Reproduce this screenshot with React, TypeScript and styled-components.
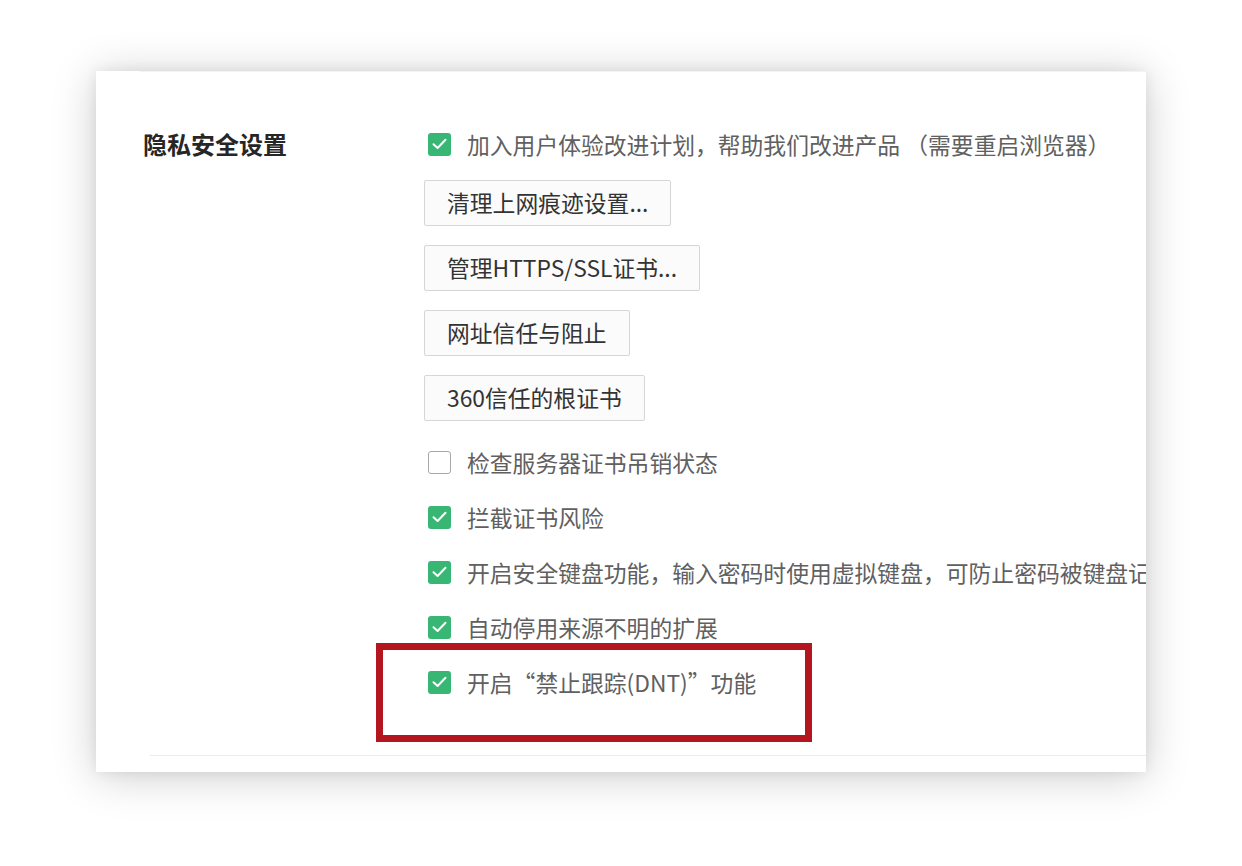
import React from 'react';
import styled, { createGlobalStyle } from 'styled-components';

const GlobalStyle = createGlobalStyle`
  html, body {
    margin: 0;
    padding: 0;
    background: #ffffff;
  }
  body {
    font-family: "Noto Sans CJK SC", "Noto Sans", sans-serif;
  }
`;

const Page = styled.div`
  width: 1242px;
  height: 866px;
  overflow: hidden;
  padding: 71px 0 0 96px;
  box-sizing: border-box;
`;

const Card = styled.div`
  width: 1050px;
  height: 701px;
  background: #ffffff;
  overflow: hidden;
  box-shadow: 0 4px 42px rgba(0, 0, 0, 0.2), 0 0 12px rgba(0, 0, 0, 0.07);
`;

const Rule = styled.div<{ $inset: number; $color: string }>`
  height: 1px;
  margin-left: ${(p) => p.$inset}px;
  background: ${(p) => p.$color};
`;

const Section = styled.section`
  display: grid;
  grid-template-columns: 281px 1fr;
  padding: 55px 0 58px 47px;
  margin-top: 2px;
`;

const SectionTitle = styled.h3`
  margin: 0;
  font-size: 24px;
  line-height: 30px;
  font-weight: 700;
  color: #262626;
`;

const Content = styled.div`
  display: flex;
  flex-direction: column;
  min-width: 0;
`;

const ButtonGroup = styled.div`
  display: flex;
  flex-direction: column;
  align-items: flex-start;
  gap: 19px;
  margin: 21px 0 26px;
`;

const ActionButton = styled.button`
  height: 46px;
  padding: 0 22px;
  border: 1px solid #d6d6d6;
  border-radius: 2px;
  background: #fbfbfb;
  color: #333;
  font-family: "Noto Sans CJK SC", "Noto Sans", sans-serif;
  font-size: 22.8px;
  line-height: 44px;
  white-space: nowrap;
  cursor: pointer;
`;

const CheckList = styled.div`
  display: flex;
  flex-direction: column;
  gap: 25px;
`;

const Row = styled.label`
  position: relative;
  display: flex;
  align-items: center;
  height: 30px;
  padding-left: 4px;
  gap: 16px;
  white-space: nowrap;
  font-size: 22.8px;
  color: #606060;
`;

const Box = styled.span<{ $checked: boolean }>`
  flex: none;
  width: 23px;
  height: 23px;
  box-sizing: border-box;
  border-radius: 3px;
  display: flex;
  align-items: center;
  justify-content: center;
  background: ${(p) => (p.$checked ? '#38b673' : '#ffffff')};
  border: ${(p) => (p.$checked ? 'none' : '1.5px solid #a8a8a8')};
`;

const Highlight = styled.span`
  position: absolute;
  left: -48px;
  top: -24px;
  width: 436px;
  height: 99px;
  box-sizing: border-box;
  border: 7px solid #b3161e;
  pointer-events: none;
`;

const Check = ({ checked }: { checked: boolean }) => (
  <Box $checked={checked}>
    {checked && (
      <svg width="15" height="12" viewBox="0 0 15 12">
        <polyline
          points="1.5,6.2 5.6,10 13.5,1.8"
          fill="none"
          stroke="#ffffff"
          strokeWidth="2"
          strokeLinecap="round"
          strokeLinejoin="round"
        />
      </svg>
    )}
  </Box>
);

const buttons = [
  '清理上网痕迹设置...',
  '管理HTTPS/SSL证书...',
  '网址信任与阻止',
  '360信任的根证书',
];

const options = [
  { label: '检查服务器证书吊销状态', checked: false },
  { label: '拦截证书风险', checked: true },
  {
    label: '开启安全键盘功能，输入密码时使用虚拟键盘，可防止密码被键盘记录',
    checked: true,
  },
  { label: '自动停用来源不明的扩展', checked: true },
];

export default function App() {
  return (
    <>
      <GlobalStyle />
      <Page>
        <Card>
          <Rule $inset={44} $color="#f3f3f3" />
          <Section>
            <SectionTitle>隐私安全设置</SectionTitle>
            <Content>
              <Row>
                <Check checked />
                加入用户体验改进计划，帮助我们改进产品 （需要重启浏览器）
              </Row>
              <ButtonGroup>
                {buttons.map((b) => (
                  <ActionButton key={b}>{b}</ActionButton>
                ))}
              </ButtonGroup>
              <CheckList>
                {options.map((o) => (
                  <Row key={o.label}>
                    <Check checked={o.checked} />
                    {o.label}
                  </Row>
                ))}
                <Row>
                  <Check checked />
                  开启“禁止跟踪(DNT)”功能
                  <Highlight />
                </Row>
              </CheckList>
            </Content>
          </Section>
          <Rule $inset={54} $color="#ebebeb" />
        </Card>
      </Page>
    </>
  );
}
